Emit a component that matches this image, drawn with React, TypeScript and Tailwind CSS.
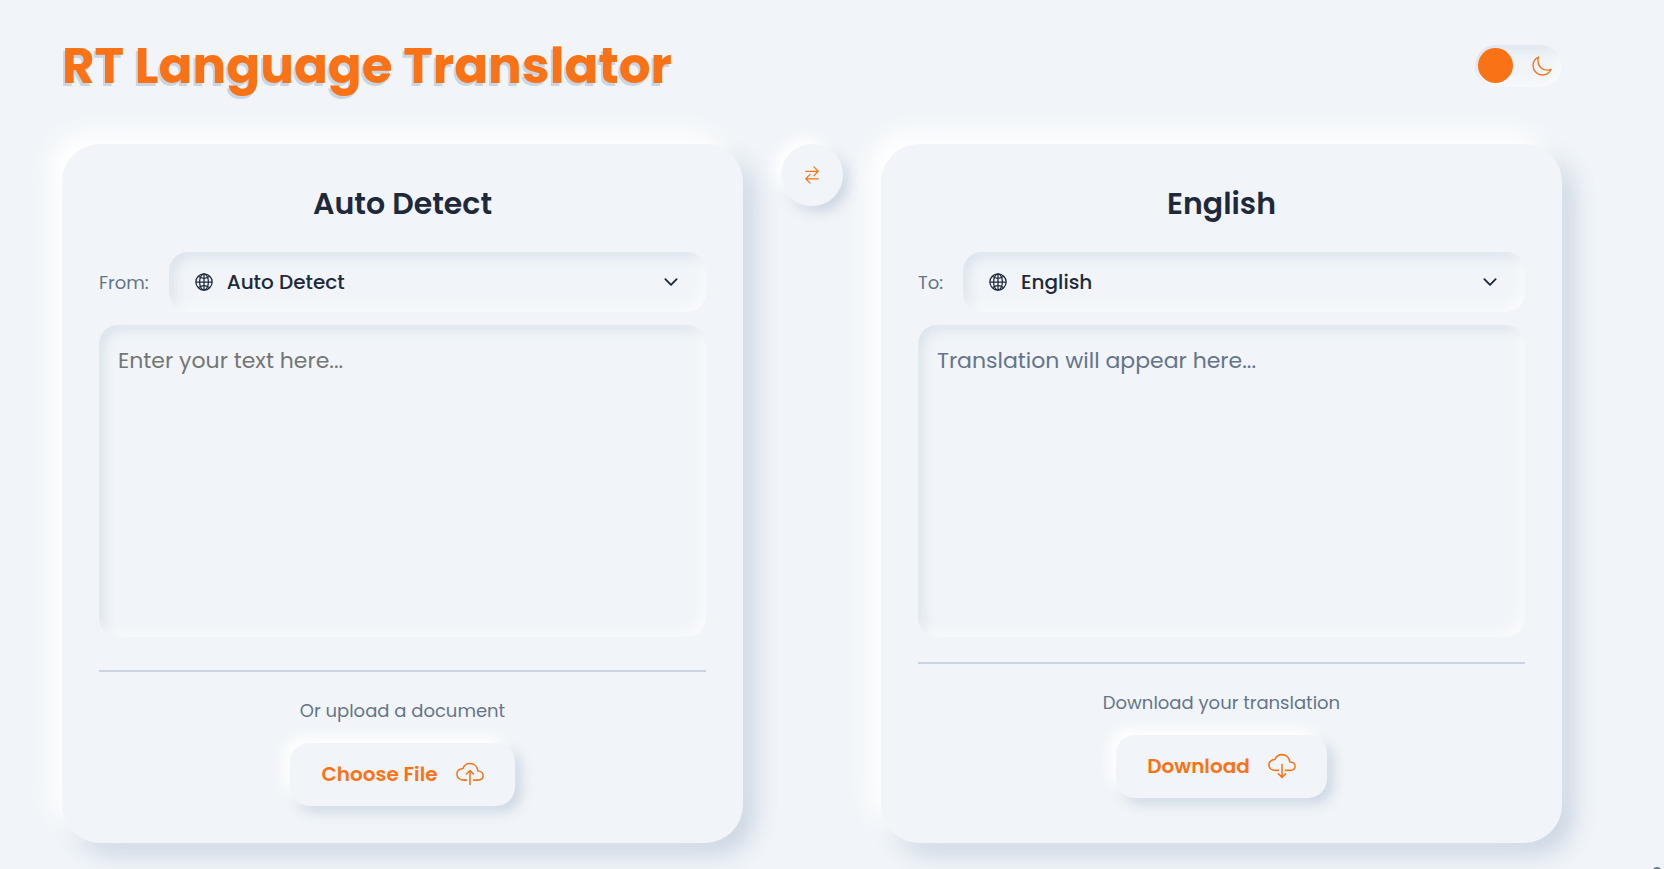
import { useState } from "react";
import {
  IoChevronDownOutline,
  IoCloudDownloadOutline,
  IoCloudUploadOutline,
  IoGlobeOutline,
  IoMoonOutline,
  IoSwapHorizontalOutline,
} from "react-icons/io5";

const languages = ["Auto Detect", "English", "Spanish", "French", "German", "Hindi"];

const thin = "[&_*]:[stroke-width:28px]";
const inset =
  "shadow-[inset_-5px_-5px_12px_#ffffffa6,inset_5px_5px_12px_#cbd5e199]";
const raised = "shadow-[-6px_-6px_13px_#ffffff,6px_6px_13px_#cbd5e1]";

function LanguageSelect({
  id,
  label,
  value,
  onChange,
}: {
  id: string;
  label: string;
  value: string;
  onChange: (value: string) => void;
}) {
  return (
    <div className="mt-[26px] flex items-center gap-5">
      <label htmlFor={id} className="text-[18px] text-[#64748b]">
        {label}
      </label>
      <div className={`grid flex-1 items-center rounded-[19px] ${inset}`}>
        <IoGlobeOutline className="pointer-events-none col-start-1 row-start-1 ml-[25px] size-5" />
        <select
          id={id}
          value={value}
          onChange={(e) => onChange(e.target.value)}
          className="col-start-1 row-start-1 h-[60px] w-full cursor-pointer appearance-none rounded-[19px] bg-transparent px-[58px] text-[20px] font-medium outline-none"
        >
          {languages.map((l) => (
            <option key={l}>{l}</option>
          ))}
        </select>
        <IoChevronDownOutline className="pointer-events-none col-start-1 row-start-1 mr-[25px] size-5 justify-self-end" />
      </div>
    </div>
  );
}

export default function App() {
  const [from, setFrom] = useState("Auto Detect");
  const [to, setTo] = useState("English");
  const [dark, setDark] = useState(false);

  const card =
    "min-w-0 flex-1 rounded-[38px] bg-[#f1f5f9] px-[37px] pt-[37px] pb-[37px] shadow-[-12px_-12px_25px_#ffffff,12px_12px_25px_#cbd5e1]";
  const action = `flex h-[63px] items-center gap-[18px] rounded-[19px] bg-[#f1f5f9] px-[31px] pb-[2px] text-[20px] font-semibold text-[#f97316] ${raised}`;
  const area = `mt-[13px] block h-[312px] w-full resize-none rounded-[19px] bg-transparent px-[19px] pt-[19px] text-[22px] leading-[33px] text-[#1e293b] outline-none ${inset}`;

  return (
    <div className="relative min-h-screen overflow-hidden bg-[#f1f5f9] pt-[28px] pr-[102px] pb-[26px] pl-[62px] font-['Poppins','Inter',sans-serif] text-[#1e293b]">
      <header className="mb-[41px] flex items-center justify-between">
        <h1 className="text-[50px] leading-[75px] font-bold text-[#f97316] [text-shadow:-2px_3px_0_#cbd5e1]">
          RT Language Translator
        </h1>
        <label
          className={`flex h-[42px] w-[87px] cursor-pointer items-center justify-between rounded-full pr-[9px] pl-[3px] ${inset}`}
        >
          <input
            type="checkbox"
            aria-label="Dark mode"
            className="peer sr-only"
            checked={dark}
            onChange={(e) => setDark(e.target.checked)}
          />
          <span className="size-[35px] rounded-full bg-[#f97316]" />
          <IoMoonOutline className="size-[22px] text-[#f97316]" />
        </label>
      </header>

      <main className="flex items-start gap-[38px]">
        <section className={card}>
          <h2 className="text-center text-[30px] leading-[45px] font-semibold">{from}</h2>
          <LanguageSelect id="from" label="From:" value={from} onChange={setFrom} />
          <textarea
            aria-label="Source text"
            placeholder="Enter your text here..."
            className={`${area} placeholder:text-[#757575]`}
          />
          <div className="mt-[33px] flex flex-col items-center border-t-2 border-[#cbd5e1] pt-[25px]">
            <p className="text-[18px] leading-[27px] text-[#64748b]">Or upload a document</p>
            <button type="button" className={`mt-[19px] ${action}`}>
              Choose File
              <IoCloudUploadOutline className={`size-[28px] ${thin}`} />
            </button>
          </div>
        </section>

        <button
          type="button"
          aria-label="Swap languages"
          onClick={() => {
            setFrom(to);
            setTo(from);
          }}
          className={`flex size-[62px] shrink-0 items-center justify-center rounded-full bg-[#f1f5f9] text-[#f97316] ${raised}`}
        >
          <IoSwapHorizontalOutline className="size-5" />
        </button>

        <section className={`${card} self-stretch`}>
          <h2 className="text-center text-[30px] leading-[45px] font-semibold">{to}</h2>
          <LanguageSelect id="to" label="To:" value={to} onChange={setTo} />
          <textarea
            aria-label="Translation"
            readOnly
            placeholder="Translation will appear here..."
            className={`${area} placeholder:text-[#64748b]`}
          />
          <div className="mt-[25px] flex flex-col items-center border-t-2 border-[#cbd5e1] pt-[25px]">
            <p className="text-[18px] leading-[27px] text-[#64748b]">Download your translation</p>
            <button type="button" className={`mt-[19px] ${action}`}>
              Download
              <IoCloudDownloadOutline className={`size-[28px] ${thin}`} />
            </button>
          </div>
        </section>
      </main>

      <span
        aria-hidden="true"
        className="absolute right-[3px] -bottom-[6px] size-2 rounded-full bg-[#64748b]"
      />
    </div>
  );
}
